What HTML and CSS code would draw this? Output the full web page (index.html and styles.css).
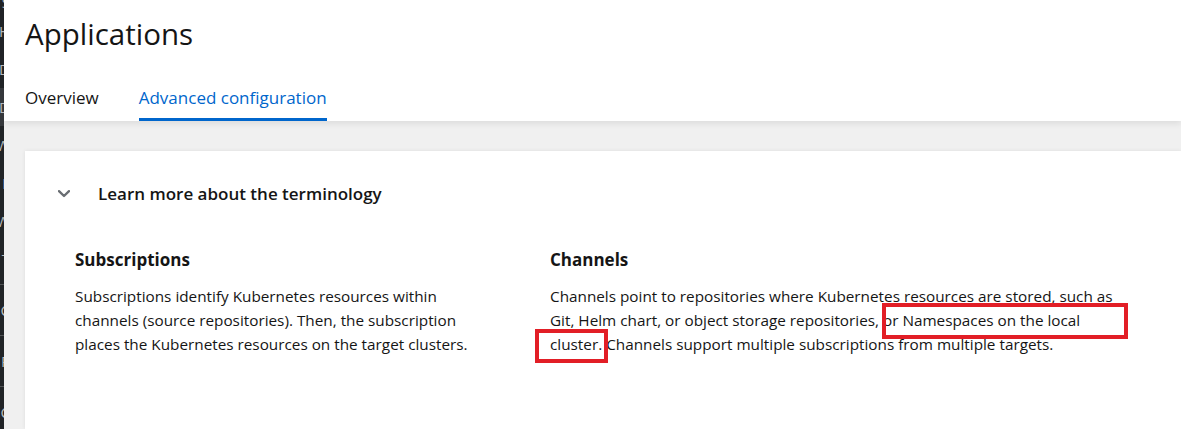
FILE: index.html
```html
<!DOCTYPE html>
<html lang="en">
<head>
<meta charset="utf-8">
<title>Applications</title>
<link rel="stylesheet" href="styles.css">
</head>
<body>
<div class="page">
  <nav class="sidebar">
    <div class="nav-item nav-top">S</div>
    <div class="nav-item">H</div>
    <div class="nav-item">D</div>
    <div class="nav-item nav-active">D</div>
    <div class="nav-item">W</div>
    <div class="nav-item">F</div>
    <div class="nav-item">W</div>
    <div class="nav-item">T</div>
    <div class="nav-sep"></div>
    <div class="nav-item">C</div>
    <div class="nav-sep"></div>
    <div class="nav-item">P</div>
    <div class="nav-sep"></div>
    <div class="nav-item">C</div>
  </nav>
  <main class="main">
    <header class="header">
      <h1 class="title">Applications</h1>
      <div class="tabs">
        <div class="tab">Overview</div>
        <div class="tab tab-active">Advanced configuration</div>
      </div>
    </header>
    <section class="content">
      <div class="card">
        <div class="toggle">
          <svg class="chevron" viewBox="0 0 12 8" width="12" height="8" aria-hidden="true">
            <path d="M1 1.2 L6 6 L11 1.2" fill="none" stroke="#6a6e73" stroke-width="2.4" stroke-linecap="round" stroke-linejoin="round"/>
          </svg>
          <h2 class="toggle-title">Learn more about the terminology</h2>
        </div>
        <div class="terms">
          <div class="term">
            <h3 class="term-title">Subscriptions</h3>
            <p class="term-text">Subscriptions identify Kubernetes resources within channels (source repositories). Then, the subscription places the Kubernetes resources on the target clusters.</p>
          </div>
          <div class="term term-wide">
            <h3 class="term-title">Channels</h3>
            <p class="term-text">Channels point to repositories where Kubernetes resources are stored, such as Git, Helm chart, or object storage repositories, or Namespaces on the local cluster. Channels support multiple subscriptions from multiple targets.</p>
          </div>
        </div>
        <div class="mark mark-one"></div>
        <div class="mark mark-two"></div>
      </div>
    </section>
  </main>
</div>
</body>
</html>
```

FILE: styles.css
```css
html, body {
  margin: 0;
  padding: 0;
  height: 100%;
}
body {
  background: #f0f0f0;
  font-family: "Open Sans", "Noto Sans", sans-serif;
  color: #151515;
  overflow: hidden;
}
.page {
  display: flex;
  height: 429px;
}
.sidebar {
  width: 4px;
  flex: 0 0 4px;
  background: #212427;
  overflow: hidden;
  display: flex;
  flex-direction: column;
}
.nav-item {
  height: 38px;
  flex: 0 0 auto;
  display: flex;
  justify-content: flex-end;
  align-items: center;
  color: #b8bbbe;
  font-size: 15px;
  white-space: nowrap;
  margin-right: -6px;
}
.nav-top {
  height: 12px;
  align-items: flex-end;
}
.nav-active {
  background: #36393d;
}
.nav-sep {
  height: 1px;
  flex: 0 0 1px;
  background: #4f5255;
  margin: 6px 0;
}
.main {
  flex: 1;
  display: flex;
  flex-direction: column;
  min-width: 0;
}
.header {
  background: #fff;
  padding: 16px 0 0 21px;
  box-shadow: 0 3px 6px rgba(0, 0, 0, 0.08);
  position: relative;
  z-index: 1;
}
.title {
  margin: 0;
  font-size: 29.5px;
  line-height: 36px;
  font-weight: 400;
}
.tabs {
  display: flex;
  gap: 40px;
  margin-top: 34px;
}
.tab {
  font-size: 17px;
  line-height: 24px;
  padding: 0 0 8px;
  border-bottom: 3px solid transparent;
}
.tab-active {
  color: #0066cc;
  border-bottom-color: #0066cc;
}
.content {
  flex: 1;
  padding: 30px 0 0 21px;
}
.card {
  position: relative;
  background: #fff;
  height: 100%;
  box-shadow: 0 0 4px rgba(0, 0, 0, 0.08);
}
.toggle {
  display: flex;
  align-items: center;
  gap: 28px;
  padding: 29px 0 0 33px;
}
.chevron {
  display: block;
}
.toggle-title {
  margin: 0;
  font-size: 17px;
  line-height: 27px;
  font-weight: 600;
}
.terms {
  display: grid;
  grid-template-columns: 420px 570px;
  column-gap: 55px;
  padding: 40px 0 0 50px;
}
.term-title {
  margin: 0;
  font-size: 17px;
  line-height: 26px;
  font-weight: 700;
}
.term-text {
  margin: 11px 0 0;
  font-size: 15.3px;
  line-height: 24px;
}
.mark {
  position: absolute;
  border: 4px solid #e21e26;
  box-sizing: border-box;
}
.mark-one {
  left: 857px;
  top: 152px;
  width: 246px;
  height: 36px;
}
.mark-two {
  left: 510px;
  top: 178px;
  width: 73px;
  height: 34px;
}
```
